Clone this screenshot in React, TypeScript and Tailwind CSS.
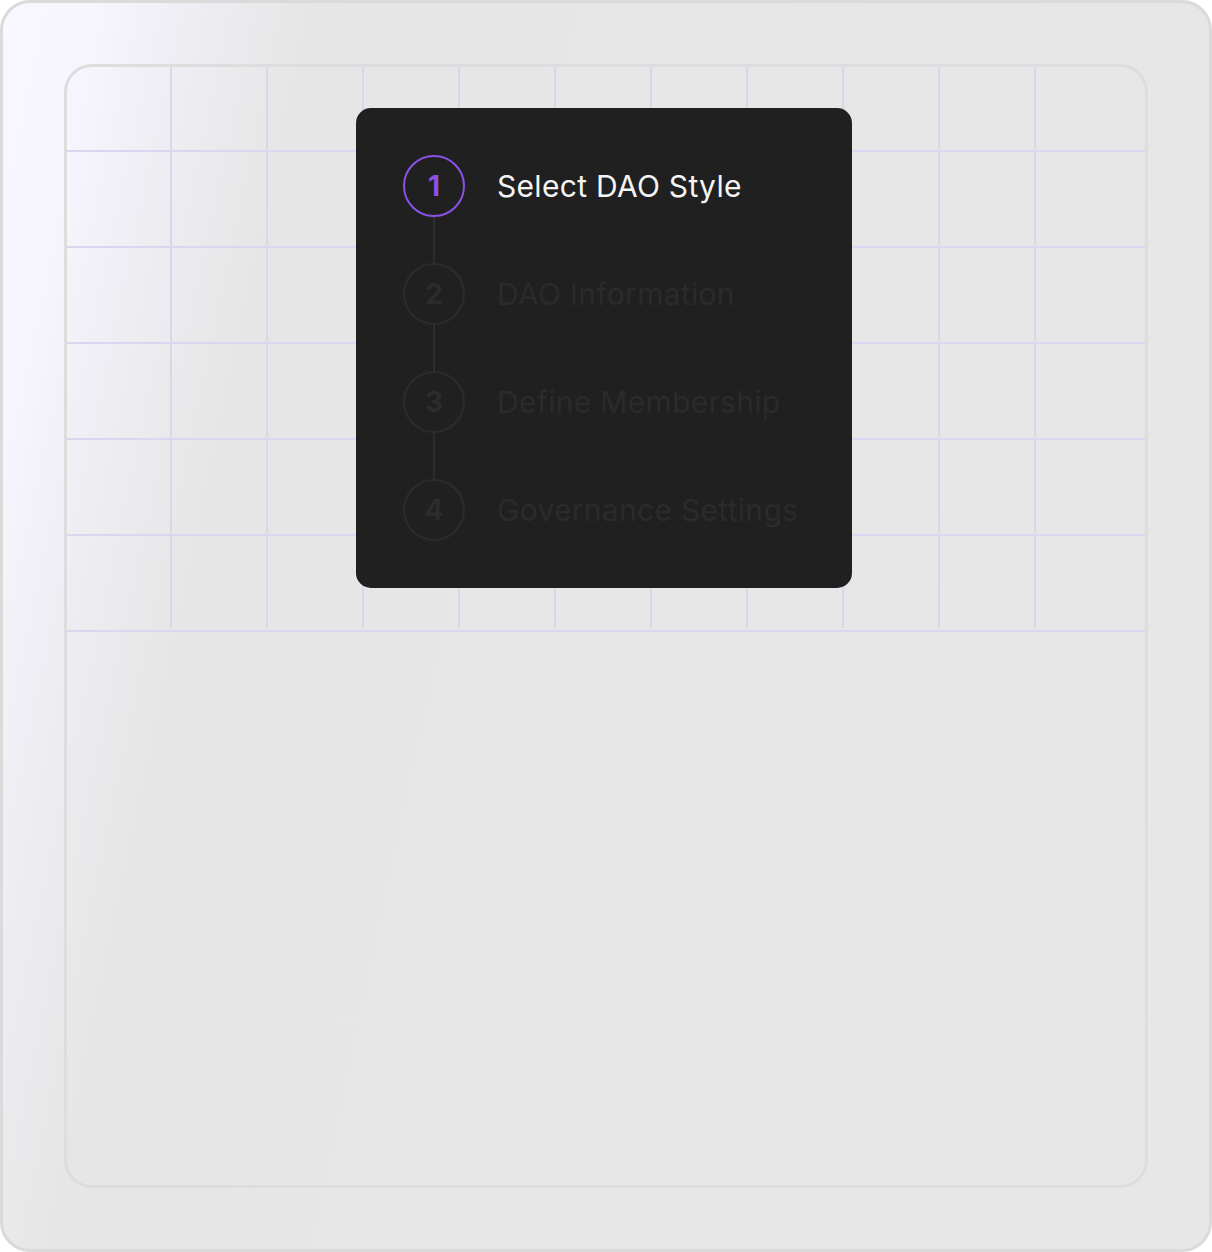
import React from "react";

const steps = [
  { n: 1, label: "Select DAO Style", active: true },
  { n: 2, label: "DAO Information", active: false },
  { n: 3, label: "Define Membership", active: false },
  { n: 4, label: "Governance Settings", active: false },
];

export default function App() {
  return (
    <div
      className="w-[1212px] h-[1252px] rounded-[30px] border-[3px] border-[#dadada] bg-[linear-gradient(102deg,#f9f7ff_0%,#f6f4fc_7%,#edecf1_14%,#e6e6e6_21%,#e7e7e7_100%)] p-[61px] overflow-hidden"
      style={{ fontFamily: "Inter, 'Noto Sans', sans-serif" }}
    >
      <div className="w-[1084px] h-[1124px] rounded-[28px] border-[3px] border-[#dddddd] overflow-hidden flex flex-col">
        <div className="h-[561px] bg-[linear-gradient(to_bottom,#dcd5ef_2px,transparent_2px)] bg-[size:96px_96px] bg-[position:0px_83px]">
          <div className="ml-[103px] w-[866px] h-full bg-[linear-gradient(to_right,#dcd5ef_2px,transparent_2px)] bg-[size:96px_96px] pt-[41px] pl-[186px]">
            <div className="w-[496px] h-[480px] rounded-[15px] bg-[#202020] pt-[47px] pl-[47px] flex flex-col">
              {steps.map((s, i) => (
                <div key={s.n} className="flex flex-col">
                  {i > 0 && <div className="ml-[30px] w-[2px] h-[46px] bg-[#2e2e2e]" />}
                  <div className="flex items-center gap-[32px]">
                    <div
                      className={
                        s.active
                          ? "w-[62px] h-[62px] shrink-0 rounded-full border-2 border-[#8c52e8] flex items-center justify-center text-[#8c52e8] text-[28px] font-bold"
                          : "w-[62px] h-[62px] shrink-0 rounded-full border-2 border-[#2c2c2c] flex items-center justify-center text-[#2c2c2c] text-[28px] font-bold"
                      }
                    >
                      {s.n}
                    </div>
                    <div
                      className={
                        s.active
                          ? "text-[30px] text-[#f4f4f4] tracking-[0.3px] whitespace-nowrap"
                          : "text-[30px] text-[#2b2b2b] tracking-[0.3px] whitespace-nowrap"
                      }
                    >
                      {s.label}
                    </div>
                  </div>
                </div>
              ))}
            </div>
          </div>
        </div>
        <div className="mt-[2px] h-[2px] bg-[#dcd5ef]" />
      </div>
    </div>
  );
}
